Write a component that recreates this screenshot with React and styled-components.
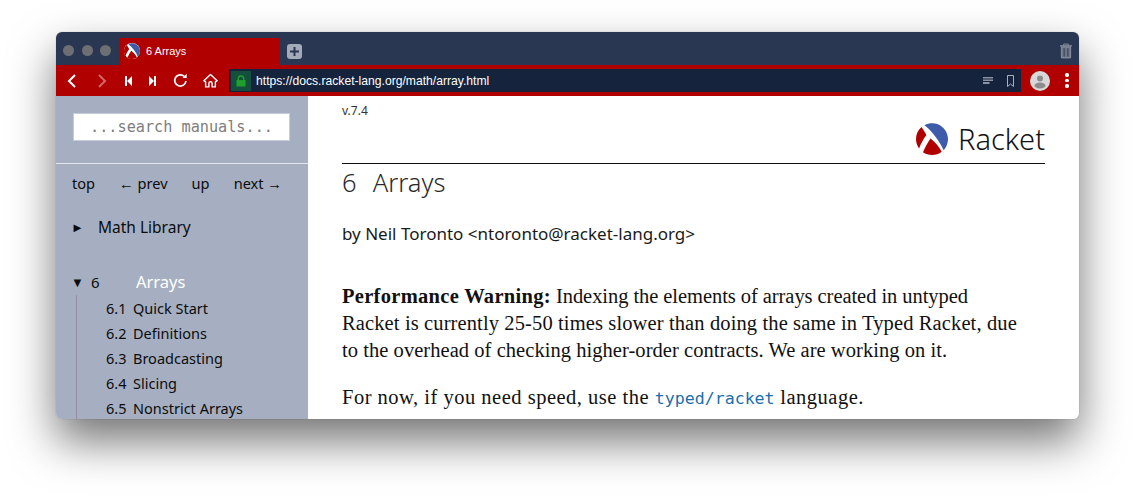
import React from "react";
import styled, { createGlobalStyle } from "styled-components";

const sans = `"Noto Sans", "Open Sans", sans-serif`;
const serif = `"Liberation Serif", serif`;
const mono = `"DejaVu Sans Mono", monospace`;

const GlobalStyle = createGlobalStyle`
  html, body {
    margin: 0;
    padding: 0;
    background: #fff;
    overflow: hidden;
  }
`;

const Stage = styled.div`
  width: 1135px;
  height: 499px;
  padding: 32px 56px 80px;
  box-sizing: border-box;
`;

const Window = styled.div`
  width: 1023px;
  height: 387px;
  border-radius: 6px;
  overflow: hidden;
  display: flex;
  flex-direction: column;
  box-shadow: 0 22px 45px rgba(0, 0, 0, 0.55), 0 0 1px rgba(0, 0, 0, 0.4);
`;

const TabBar = styled.div`
  height: 33px;
  flex: none;
  background: #2a3752;
  display: flex;
  align-items: flex-end;
`;

const Lights = styled.div`
  display: flex;
  gap: 7.5px;
  padding: 0 8px 9px 7px;
`;

const Light = styled.span`
  width: 11px;
  height: 11px;
  border-radius: 50%;
  background: #6d6f75;
`;

const Tab = styled.div`
  width: 161px;
  height: 27px;
  background: #b00000;
  display: flex;
  align-items: center;
  padding: 0 0 1px 5px;
  box-sizing: border-box;
  gap: 6px;
  color: #fff;
  font: 11px "Liberation Sans", sans-serif;
`;

const NewTab = styled.div`
  margin: 0 0 6px 7px;
  width: 15px;
  height: 15px;
  display: flex;
`;

const TrashSlot = styled.div`
  margin: 0 7px 6px auto;
  width: 12px;
  height: 16px;
  display: flex;
`;

const Toolbar = styled.div`
  height: 31px;
  flex: none;
  background: #b00000;
  display: flex;
  align-items: center;
`;

const NavIcon = styled.div`
  width: ${(p) => p.$w}px;
  height: 20px;
  flex: none;
  display: flex;
  align-items: center;
  justify-content: center;
`;

const UrlBar = styled.div`
  width: 792px;
  height: 23px;
  margin-left: 3px;
  background: #15233c;
  display: flex;
  align-items: center;
  flex: none;
`;

const LockBox = styled.div`
  width: 20px;
  height: 20px;
  margin-left: 2px;
  background: #15503f;
  display: flex;
  align-items: center;
  justify-content: center;
  flex: none;
`;

const UrlText = styled.span`
  margin-left: 5px;
  color: #fff;
  font: 12.15px "Liberation Sans", sans-serif;
`;

const UrlIcons = styled.div`
  margin-left: auto;
  display: flex;
  align-items: center;
  gap: 13.5px;
  padding-right: 7.5px;
`;

const Avatar = styled.div`
  width: 20px;
  height: 20px;
  margin-left: 9px;
  display: flex;
`;

const MoreDots = styled.div`
  margin-left: 15px;
  display: flex;
  flex-direction: column;
  gap: 2px;
`;

const Dot = styled.span`
  width: 3.5px;
  height: 3.5px;
  border-radius: 50%;
  background: #fff;
`;

const Body = styled.div`
  flex: 1;
  min-height: 0;
  display: flex;
  overflow: hidden;
`;

const Sidebar = styled.div`
  width: 252px;
  flex: none;
  background: #a5afc1;
  overflow: hidden;
  font-family: ${sans};
  color: #0c0c0c;
`;

const SearchWrap = styled.div`
  height: 68px;
  box-sizing: border-box;
  padding: 17px 18px 0 17px;
  border-bottom: 1px solid #e4e8ee;
`;

const SearchBox = styled.div`
  height: 28px;
  width: 217px;
  box-sizing: border-box;
  background: #fff;
  border: 1px solid #c8ced8;
  color: #7d7d7d;
  font: 15.2px/26px ${mono};
  text-align: center;
`;

const NavLinks = styled.div`
  display: flex;
  justify-content: space-between;
  width: 210px;
  margin: 9px 0 0 16px;
  font-size: 14.6px;
  line-height: 20px;
`;

const ParentRow = styled.div`
  display: flex;
  align-items: center;
  margin: 24px 0 0 17px;
  font-size: 15.5px;
  line-height: 20px;
`;

const Arrow = styled.span`
  width: ${(p) => p.$w + 2}px;
  margin-left: -2px;
  font-size: 13px;
  flex: none;
`;

const ChapterRow = styled.div`
  display: flex;
  align-items: center;
  margin: 35px 0 0 17px;
  font-size: 15px;
  line-height: 20px;
`;

const ChapterNum = styled.span`
  width: 45px;
  flex: none;
`;

const ChapterTitle = styled.span`
  color: #fff;
  font-size: 16.5px;
`;

const SubList = styled.div`
  margin: 3px 0 0 20px;
  border-left: 1px solid #958ea5;
  padding-left: 29px;
`;

const SubRow = styled.div`
  display: flex;
  height: 25px;
  align-items: center;
  font-size: 14.5px;
`;

const SubNum = styled.span`
  width: 27px;
  flex: none;
`;

const Content = styled.div`
  flex: 1;
  background: #fff;
  padding: 0 34px;
  overflow: hidden;
`;

const Version = styled.div`
  font: 12px/16px ${sans};
  color: #333;
  padding-top: 7px;
`;

const LogoRow = styled.div`
  height: 45px;
  display: flex;
  justify-content: flex-end;
  align-items: flex-end;
  gap: 10px;
  padding-bottom: 8px;
  border-bottom: 1px solid #111;
  box-sizing: border-box;
`;

const LogoWord = styled.span`
  font: 300 29px/34px ${sans};
  color: #111;
  margin-bottom: -1px;
`;

const Heading = styled.h1`
  margin: 2px 0 0;
  font: 300 25.5px/32px ${sans};
  color: #2a2a2a;
  word-spacing: 9.5px;
`;

const Author = styled.div`
  margin-top: 26px;
  font: 17px/20px ${sans};
  color: #1a1a1a;
`;

const Para = styled.div`
  margin-top: ${(p) => p.$top}px;
  font: 20.5px/27px ${serif};
  color: #111;
`;

const Line = styled.span`
  display: block;
  white-space: nowrap;
  letter-spacing: ${(p) => p.$track}px;
`;

const Strong = styled.b`
  letter-spacing: 0.3px;
`;

const Code = styled.span`
  font: 16.6px ${mono};
  letter-spacing: 0;
  color: #1a70aa;
`;

const RacketMark = ({ size }) => (
  <svg width={size} height={size} viewBox="0 0 32 32">
    <circle cx="16" cy="16" r="16" fill="#fff" />
    <path d="M8.5 2.2C14 -.6 21 -.3 25.6 3.5 30 7 32 11.5 32 16c0 4.5-1.8 8.6-4.3 11.3C24 19 17.5 9.5 8.5 2.2z" fill="#3e5ba9" />
    <path d="M5.5 4C2.1 7 0 11.3 0 16c0 3.5 1.1 6.8 3.1 9.4 1.8-4.7 4.3-9.3 7.3-13.3C8.8 9.2 7.2 6.4 5.5 4z" fill="#b00000" />
    <path d="M14.5 15.5c-3.2 4.5-5.7 9.7-7.5 13.8C9.5 31 12.7 32 16 32c3.7 0 7-1.2 9.7-3.3-2.4-4.7-6.3-9.6-11.2-13.2z" fill="#b00000" />
  </svg>
);

const Chevron = ({ dir, color }) => (
  <svg width="9" height="14" viewBox="0 0 9 14" fill="none" stroke={color} strokeWidth="2">
    <path d={dir === "left" ? "M8 1 2 7l6 6" : "M1 1l6 6-6 6"} />
  </svg>
);

const SkipIcon = ({ flip }) => (
  <svg width="7" height="10" viewBox="0 0 7 10" fill="#fff" style={flip ? { transform: "scaleX(-1)" } : undefined}>
    <path d="M0 0h2v10H0zM2 5 7 0v10z" />
  </svg>
);

const ReloadIcon = () => (
  <svg width="15" height="15" viewBox="0 0 16 16" fill="none" stroke="#fff" strokeWidth="1.8">
    <path d="M13.8 8.5A6 6 0 1 1 12 3.6" />
    <path d="M14.6.8v4.5h-4.5z" fill="#fff" stroke="none" />
  </svg>
);

const HomeIcon = () => (
  <svg width="15" height="15" viewBox="0 0 16 16" fill="none" stroke="#fff" strokeWidth="1.5" strokeLinejoin="round">
    <path d="M8 1.5.9 8.2 2.8 9.5v5.3H6.3V11c0-2.2 3.4-2.2 3.4 0v3.8h3.5V9.5l1.9-1.3z" />
  </svg>
);

const LockIcon = () => (
  <svg width="10" height="12" viewBox="0 0 11 13">
    <path d="M2.5 6V4a3 3 0 0 1 6 0v2" fill="none" stroke="#1fa02c" strokeWidth="1.5" />
    <rect x="0.5" y="5.5" width="10" height="7" fill="#1fa02c" />
  </svg>
);

const ReaderIcon = () => (
  <svg width="10" height="8" viewBox="0 0 10 8" fill="#8b93a3">
    <path d="M0 0h10v1.5H0zM0 2.5h10V4H0zM0 5h6.5v2H0z" />
  </svg>
);

const BookmarkIcon = () => (
  <svg width="7" height="12" viewBox="0 0 7 12" fill="none" stroke="#aab0bc">
    <path d="M.5.5h6v11l-3-2.5-3 2.5z" />
  </svg>
);

const PlusIcon = () => (
  <svg width="15" height="15" viewBox="0 0 15 15">
    <rect width="15" height="15" rx="3" fill="#a3abb9" />
    <path d="M7.5 3v9M3 7.5h9" stroke="#2a3752" strokeWidth="2" />
  </svg>
);

const TrashIcon = () => (
  <svg width="12" height="16" viewBox="0 0 13 17" fill="none" stroke="#8b93a3">
    <path d="M0 3h13" strokeWidth="1.5" />
    <path d="M4 2.5V1h5v1.5" />
    <path d="M1.5 4v12h10V4z" fill="#6e7788" />
    <path d="M4.5 5.5v9M8.5 5.5v9" stroke="#2a3752" />
  </svg>
);

const AvatarIcon = () => (
  <svg width="20" height="20" viewBox="0 0 20 20">
    <circle cx="10" cy="10" r="10" fill="#d8d8d8" />
    <circle cx="10" cy="7.5" r="3" fill="#8c8c8c" />
    <ellipse cx="10" cy="14.5" rx="5.5" ry="3" fill="#8c8c8c" />
  </svg>
);

const subs = [
  ["6.1", "Quick Start"],
  ["6.2", "Definitions"],
  ["6.3", "Broadcasting"],
  ["6.4", "Slicing"],
  ["6.5", "Nonstrict Arrays"],
];

export default function App() {
  return (
    <Stage>
      <GlobalStyle />
      <Window>
        <TabBar>
          <Lights>
            <Light />
            <Light />
            <Light />
          </Lights>
          <Tab>
            <RacketMark size={16} />
            6 Arrays
          </Tab>
          <NewTab>
            <PlusIcon />
          </NewTab>
          <TrashSlot>
            <TrashIcon />
          </TrashSlot>
        </TabBar>
        <Toolbar>
          <NavIcon $w={30}>
            <Chevron dir="left" color="#fff" />
          </NavIcon>
          <NavIcon $w={32}>
            <Chevron dir="right" color="#d5656a" />
          </NavIcon>
          <NavIcon $w={20}>
            <SkipIcon />
          </NavIcon>
          <NavIcon $w={28}>
            <SkipIcon flip />
          </NavIcon>
          <NavIcon $w={28}>
            <ReloadIcon />
          </NavIcon>
          <NavIcon $w={32}>
            <HomeIcon />
          </NavIcon>
          <UrlBar>
            <LockBox>
              <LockIcon />
            </LockBox>
            <UrlText>https://docs.racket-lang.org/math/array.html</UrlText>
            <UrlIcons>
              <ReaderIcon />
              <BookmarkIcon />
            </UrlIcons>
          </UrlBar>
          <Avatar>
            <AvatarIcon />
          </Avatar>
          <MoreDots>
            <Dot />
            <Dot />
            <Dot />
          </MoreDots>
        </Toolbar>
        <Body>
          <Sidebar>
            <SearchWrap>
              <SearchBox>...search manuals...</SearchBox>
            </SearchWrap>
            <NavLinks>
              <span>top</span>
              <span>← prev</span>
              <span>up</span>
              <span>next →</span>
            </NavLinks>
            <ParentRow>
              <Arrow $w={25}>►</Arrow>
              Math Library
            </ParentRow>
            <ChapterRow>
              <Arrow $w={18}>▼</Arrow>
              <ChapterNum>6</ChapterNum>
              <ChapterTitle>Arrays</ChapterTitle>
            </ChapterRow>
            <SubList>
              {subs.map(([num, title]) => (
                <SubRow key={num}>
                  <SubNum>{num}</SubNum>
                  {title}
                </SubRow>
              ))}
            </SubList>
          </Sidebar>
          <Content>
            <Version>v.7.4</Version>
            <LogoRow>
              <RacketMark size={32} />
              <LogoWord>Racket</LogoWord>
            </LogoRow>
            <Heading>6 Arrays</Heading>
            <Author>by Neil Toronto &lt;ntoronto@racket-lang.org&gt;</Author>
            <Para $top={39}>
              <Line $track={-0.06}>
                <Strong>Performance Warning:</Strong> Indexing the elements of arrays created in untyped
              </Line>
              <Line $track={0.12}>Racket is currently 25-50 times slower than doing the same in Typed Racket, due</Line>
              <Line $track={0.05}>to the overhead of checking higher-order contracts. We are working on it.</Line>
            </Para>
            <Para $top={20}>
              <Line $track={0.5}>
                For now, if you need speed, use the <Code>typed/racket</Code> language.
              </Line>
            </Para>
          </Content>
        </Body>
      </Window>
    </Stage>
  );
}
